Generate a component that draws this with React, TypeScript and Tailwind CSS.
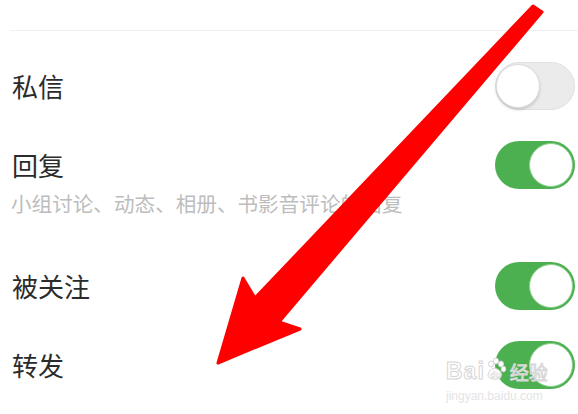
import React from "react";

const FONT = "font-['Noto_Sans_CJK_SC','Noto_Sans',sans-serif]";

function Toggle({ on }: { on: boolean }) {
  if (on) {
    return (
      <div className="relative h-[48px] w-[80px] rounded-full bg-[#4caf50]">
        <div className="absolute right-[2px] top-[2px] h-[44px] w-[44px] rounded-full border border-[#8fd18f] bg-white" />
      </div>
    );
  }
  return (
    <div className="relative h-[48px] w-[80px] rounded-full border border-[#e0e0e0] bg-[#ebebeb]">
      <div className="absolute left-0 top-[1px] h-[44px] w-[44px] rounded-full border border-[#dcdcdc] bg-white shadow-[0_2px_3px_rgba(0,0,0,0.15)]" />
    </div>
  );
}

function Row({ title, on, className = "" }: { title: string; on: boolean; className?: string }) {
  return (
    <div className={`flex items-center justify-between pl-[12px] pr-[3px] ${className}`}>
      <span className="text-[26px] leading-none text-[#2b2b2b]">{title}</span>
      <Toggle on={on} />
    </div>
  );
}

function Arrow() {
  return (
    <svg className="pointer-events-none absolute inset-0" width="578" height="414" viewBox="0 0 578 414">
      <polygon
        points="218,363 300,329 279,322 542,12 533,6 255,298 243,278"
        fill="#ff0000"
        stroke="#ff0000"
        strokeWidth="3"
        strokeLinejoin="round"
      />
    </svg>
  );
}

function Watermark() {
  return (
    <div className="pointer-events-none absolute left-[446px] top-[360px] flex flex-col items-start">
      <div className="flex items-center">
        <span className="font-['Liberation_Sans',sans-serif] text-[23px] font-bold leading-none tracking-[1px] text-white/80 [-webkit-text-stroke:1px_#d6d6d6]">
          Bai
        </span>
        <svg width="22" height="24" viewBox="0 0 22 24" className="-mt-[6px]">
          <g fill="#ffffff" stroke="#d6d6d6" strokeWidth="1">
            <ellipse cx="6" cy="7" rx="2.5" ry="3" />
            <ellipse cx="11" cy="4" rx="2.5" ry="3" />
            <ellipse cx="16" cy="7" rx="2.5" ry="3" />
            <ellipse cx="18.5" cy="12" rx="2.3" ry="2.8" />
            <path d="M3 19 C3 13 9 10 12 12 C16 14 18 17 15 21 C12 23 5 23 3 19 Z" />
          </g>
          <text x="5" y="21" fontSize="9" fontWeight="bold" fill="#ffffff" stroke="#d6d6d6" strokeWidth="0.5" fontFamily="Liberation Sans, sans-serif">
            du
          </text>
        </svg>
        <span className={`${FONT} ml-[3px] text-[19px] leading-none text-white/80 [-webkit-text-stroke:1px_#d6d6d6]`}>
          经验
        </span>
      </div>
      <span className="mt-[7px] font-['Liberation_Sans',sans-serif] text-[12px] leading-none text-[#e4e4e4]">
        jingyan.baidu.com
      </span>
    </div>
  );
}

export default function App() {
  return (
    <div className={`relative h-[414px] w-[578px] overflow-hidden bg-white ${FONT}`}>
      <div className="h-[30px]" />
      <div className="ml-[10px] h-px bg-[#efefef]" />

      <Row title="私信" on={false} className="h-[110px]" />

      <div>
        <Row title="回复" on className="h-[48px]" />
        <p className="mt-[2px] pl-[11px] text-[20.6px] leading-[24px] text-[#bdbdbd]">
          小组讨论、动态、相册、书影音评论的回复
        </p>
      </div>

      <Row title="被关注" on className="mt-[47px] h-[48px]" />
      <Row title="转发" on className="mt-[31px] h-[48px]" />

      <Arrow />
      <Watermark />
    </div>
  );
}
